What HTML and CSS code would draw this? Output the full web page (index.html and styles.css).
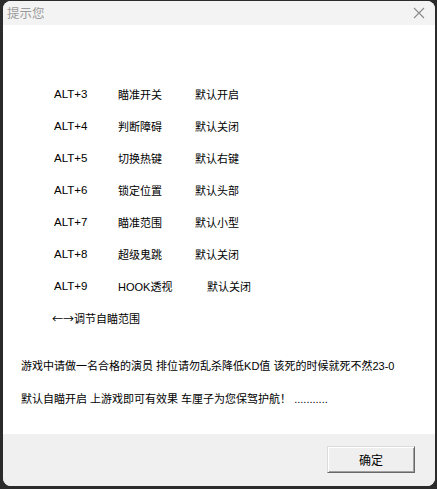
FILE: index.html
```html
<!DOCTYPE html>
<html>
<head>
<meta charset="utf-8">
<link rel="stylesheet" href="styles.css">
</head>
<body>
<div class="window">
  <div class="titlebar">
    <span class="title">提示您</span>
    <svg class="close" width="12" height="12" viewBox="0 0 12 12"><path d="M1 1 L11 11 M11 1 L1 11" stroke="#8a8a8a" stroke-width="1.1" fill="none"/></svg>
  </div>
  <div class="content">
    <div class="table">
      <div class="row"><span class="c1">ALT+3</span><span class="c2">瞄准开关</span><span class="c3">默认开启</span></div>
      <div class="row"><span class="c1">ALT+4</span><span class="c2">判断障碍</span><span class="c3">默认关闭</span></div>
      <div class="row"><span class="c1">ALT+5</span><span class="c2">切换热键</span><span class="c3">默认右键</span></div>
      <div class="row"><span class="c1">ALT+6</span><span class="c2">锁定位置</span><span class="c3">默认头部</span></div>
      <div class="row"><span class="c1">ALT+7</span><span class="c2">瞄准范围</span><span class="c3">默认小型</span></div>
      <div class="row"><span class="c1">ALT+8</span><span class="c2">超级鬼跳</span><span class="c3">默认关闭</span></div>
      <div class="row"><span class="c1">ALT+9</span><span class="c2">HOOK透视</span><span class="c3 shifted">默认关闭</span></div>
      <div class="row arrows"><span class="arrow">←→</span>调节自瞄范围</div>
    </div>
    <p class="line first">游戏中请做一名合格的演员 排位请勿乱杀降低KD值 该死的时候就死不然23-0</p>
    <p class="line">默认自瞄开启 上游戏即可有效果 车厘子为您保驾护航！ ...........</p>
  </div>
  <div class="footer">
    <button class="ok">确定</button>
  </div>
</div>
</body>
</html>
```
FILE: styles.css
```css
html, body {
  margin: 0;
  padding: 0;
}
body {
  width: 437px;
  height: 489px;
  background: #2b2b2b;
  overflow: hidden;
  font-family: "Liberation Sans", "Noto Sans CJK SC", sans-serif;
  font-size: 11px;
  color: #000;
}
.window {
  margin: 1px 0 0 3px;
  width: 432px;
  height: 485px;
  border-radius: 8px;
  overflow: hidden;
  display: flex;
  flex-direction: column;
  background: #fff;
}
.titlebar {
  height: 24px;
  background: #f3f3f3;
  display: flex;
  align-items: center;
  justify-content: space-between;
  padding: 0 10px 0 4px;
  flex: none;
}
.title {
  color: #9a9a9a;
  font-family: "Noto Sans CJK SC", sans-serif;
  font-size: 12.5px;
  line-height: 24px;
}
.close {
  display: block;
}
.content {
  flex: 1;
  background: #fff;
  padding: 53px 0 0 0;
}
.table {
  padding-left: 51px;
}
.row {
  height: 32px;
  display: flex;
  align-items: center;
  white-space: nowrap;
}
.c1 {
  width: 64px;
  font-size: 11.5px;
}
.c2 {
  width: 77px;
}
.shifted {
  margin-left: 12px;
}
.arrows {
  margin-left: -2px;
}
.arrow {
  font-family: "Noto Sans CJK SC", sans-serif;
}
.line {
  margin: 0;
  padding-left: 18px;
  line-height: 20px;
  white-space: nowrap;
}
.first {
  margin-top: 22px;
  margin-bottom: 13px;
}
.footer {
  height: 52px;
  background: #f0f0f0;
  flex: none;
  display: flex;
  justify-content: flex-end;
  align-items: flex-start;
  padding: 12px 20px 0 0;
  box-sizing: border-box;
}
.ok {
  width: 88px;
  height: 27px;
  background: #efefef;
  border: 1px solid;
  border-color: #dcdcdc #696969 #696969 #dcdcdc;
  box-shadow: inset 1px 1px 0 #fff, inset -1px -1px 0 #a0a0a0;
  font-family: "Noto Sans CJK SC", sans-serif;
  font-size: 12px;
  color: #000;
  padding: 0;
  border-radius: 0;
}
```
